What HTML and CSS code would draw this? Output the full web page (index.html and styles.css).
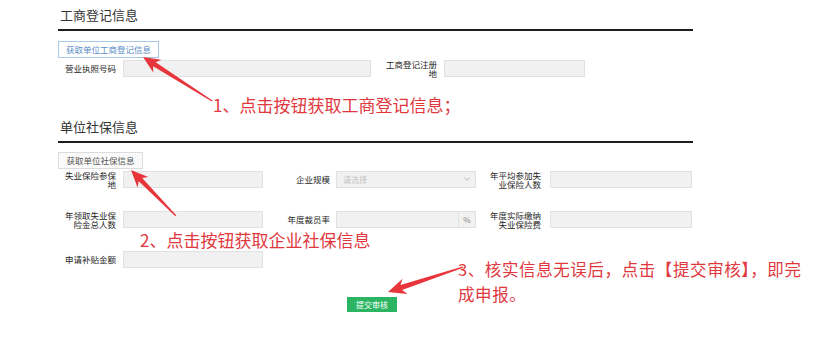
FILE: index.html
```html
<!DOCTYPE html>
<html lang="zh-CN">
<head>
    <meta charset="UTF-8">
    <meta name="viewport" content="width=device-width, initial-scale=1.0">
    <title>单位信息</title>
    <link rel="stylesheet" href="styles.css">
</head>
<body>
    <div class="page">
        <div class="form">
            <h3 class="section-title">工商登记信息</h3>
            <button class="btn btn-blue">获取单位工商登记信息</button>
            <div class="row">
                <label class="lbl">营业执照号码</label>
                <span class="input w-long"></span>
                <label class="lbl lbl-reg">工商登记注册地</label>
                <span class="input w-reg"></span>
            </div>

            <h3 class="section-title second">单位社保信息</h3>
            <button class="btn btn-gray">获取单位社保信息</button>
            <div class="row">
                <label class="lbl">失业保险参保地</label>
                <span class="input"></span>
                <label class="lbl lbl-mid">企业规模</label>
                <span class="input select">请选择<i class="chev"></i></span>
                <label class="lbl lbl-right">年平均参加失业保险人数</label>
                <span class="input w-last"></span>
            </div>
            <div class="row gap">
                <label class="lbl">年领取失业保险金总人数</label>
                <span class="input"></span>
                <label class="lbl lbl-mid">年度裁员率</label>
                <span class="input addon-wrap"><span class="addon">%</span></span>
                <label class="lbl lbl-right">年度实际缴纳失业保险费</label>
                <span class="input w-last"></span>
            </div>
            <div class="row gap">
                <label class="lbl">申请补贴金额</label>
                <span class="input"></span>
            </div>

            <button class="btn btn-submit">提交审核</button>
        </div>

        <p class="note note-1">1、点击按钮获取工商登记信息；</p>
        <p class="note note-2">2、点击按钮获取企业社保信息</p>
        <p class="note note-3">3、核实信息无误后，点击【提交审核】，即完成申报。</p>

        <svg class="arrows" width="832" height="337" viewBox="0 0 832 337">
            <g fill="#e8353b">
                <polygon transform="translate(143,57) rotate(32.5)" points="0,0 17,-7.5 13.5,-2.4 82,-0.6 82,0.6 13.5,2.4 17,7.5"/>
                <polygon transform="translate(131,170) rotate(45.6)" points="0,0 17,-7.5 13.5,-2.4 64,-0.6 64,0.6 13.5,2.4 17,7.5"/>
                <polygon transform="translate(388,292) rotate(-18.4)" points="0,0 18,-8 14,-2.6 79,-0.6 79,0.6 14,2.6 18,8"/>
            </g>
        </svg>
    </div>
</body>
</html>
```

FILE: styles.css
```css
body { margin: 0; background: #fff; font-family: "Noto Sans CJK SC", "Noto Sans", sans-serif; color: #333; }
.page { position: relative; width: 832px; height: 337px; overflow: hidden; }
.form { width: 635px; padding-left: 58px; }

.section-title { margin: 0; padding: 6px 0 5px 2px; font-size: 13px; line-height: 18px; font-weight: normal; color: #333; border-bottom: 2px solid #1c1c1c; }
.section-title.second { margin-top: 35px; }

.btn { display: block; height: 17px; padding: 0; font-family: inherit; font-size: 8.5px; line-height: 15px; border-radius: 0; }
.btn-blue { width: 101px; margin-top: 10px; color: #5a8cc4; background: #fff; border: 1px solid #a9c7e6; }
.btn-gray { width: 85px; margin-top: 9px; color: #555; background: #fafafa; border: 1px solid #dcdcdc; }
.btn-submit { width: 50px; height: 15px; margin: 29px 0 0 289px; color: #fff; background: #2bb563; border: none; font-size: 8px; line-height: 15px; }

.row { display: flex; align-items: center; height: 17px; margin-top: 2px; }
.row.gap { margin-top: 23px; }

.lbl { flex: none; width: 58px; margin-right: 7px; text-align: right; font-size: 8.5px; line-height: 9px; color: #1e1e1e; }
.lbl-reg { width: 53px; margin-left: 13px; }
.lbl-mid { width: 60px; margin-left: 7px; margin-right: 6px; }
.lbl-right { width: 58px; margin-left: 7px; margin-right: 9px; }

.input { flex: none; box-sizing: border-box; position: relative; width: 140px; height: 17px; background: #f1f1f1; border: 1px solid #e1e1e1; }
.w-long { width: 248px; }
.w-reg { width: 141px; }
.w-last { width: 142px; }

.select { padding-left: 6px; font-size: 8px; line-height: 15px; color: #c4c4c4; }
.chev { position: absolute; right: 6px; top: 4px; width: 3px; height: 3px; border-right: 1px solid #c8c8c8; border-bottom: 1px solid #c8c8c8; transform: rotate(45deg); }

.addon { position: absolute; right: 0; top: 0; width: 16px; height: 15px; border-left: 1px solid #e4e4e4; text-align: center; font-size: 8px; line-height: 15px; color: #888; }

.note { position: absolute; margin: 0; color: #e1373d; font-size: 17px; line-height: 24px; }
.note-1 { left: 213px; top: 93px; }
.note-2 { left: 140px; top: 228px; }
.note-3 { left: 458px; top: 257px; width: 348px; font-size: 16.5px; line-height: 25px; letter-spacing: 0.6px; }

.arrows { position: absolute; left: 0; top: 0; pointer-events: none; }
```
